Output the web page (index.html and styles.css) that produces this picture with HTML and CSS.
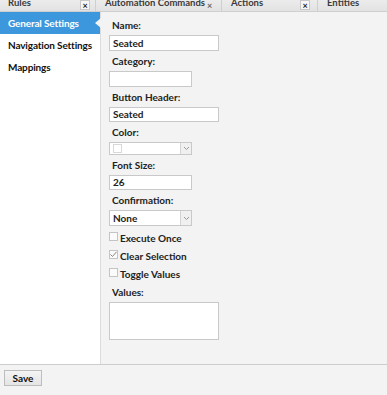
FILE: index.html
```html
<!DOCTYPE html>
<html lang="en">
<head>
  <meta charset="UTF-8">
  <title>Rule Editor</title>
  <link rel="stylesheet" href="styles.css">
</head>
<body>
  <div class="app">
    <div class="tabs">
      <div class="tab-row">
        <div class="tab tab-rules">Rules <span class="close boxed">×</span></div>
        <div class="tab tab-auto">Automation Commands <span class="close">×</span></div>
        <div class="tab tab-actions">Actions <span class="close boxed">×</span></div>
        <div class="tab tab-entities">Entities</div>
      </div>
    </div>

    <div class="main">
      <div class="sidebar">
        <div class="nav-item active">General Settings</div>
        <div class="nav-item">Navigation Settings</div>
        <div class="nav-item">Mappings</div>
      </div>

      <div class="content">
        <div class="field">
          <label>Name:</label>
          <div class="input wide">Seated</div>
        </div>
        <div class="field">
          <label>Category:</label>
          <div class="input narrow"></div>
        </div>
        <div class="field">
          <label>Button Header:</label>
          <div class="input wide slim">Seated</div>
        </div>
        <div class="field">
          <label>Color:</label>
          <div class="select narrow short">
            <span class="value"><span class="swatch"></span></span>
            <span class="arrow">
              <svg width="7" height="5" viewBox="0 0 7 5"><path d="M1 1 L3.5 3.5 L6 1" fill="none" stroke="#999" stroke-width="1"/></svg>
            </span>
          </div>
        </div>
        <div class="field">
          <label>Font Size:</label>
          <div class="input narrow slim">26</div>
        </div>
        <div class="field">
          <label>Confirmation:</label>
          <div class="select narrow">
            <span class="value">None</span>
            <span class="arrow">
              <svg width="7" height="5" viewBox="0 0 7 5"><path d="M1 1 L3.5 3.5 L6 1" fill="none" stroke="#999" stroke-width="1"/></svg>
            </span>
          </div>
        </div>

        <div class="check"><span class="box"></span>Execute Once</div>
        <div class="check"><span class="box checked">
          <svg width="7" height="7" viewBox="0 0 7 7"><path d="M0.5 3.5 L2.5 5.5 L6.5 0.8" fill="none" stroke="#888" stroke-width="1"/></svg>
        </span>Clear Selection</div>
        <div class="check"><span class="box"></span>Toggle Values</div>

        <div class="field values">
          <label>Values:</label>
          <div class="textarea"></div>
        </div>
      </div>
    </div>

    <div class="footer">
      <button class="btn">Save</button>
    </div>
  </div>
</body>
</html>
```

FILE: styles.css
```css
* {
  box-sizing: border-box;
}

body {
  margin: 0;
  font-family: Lato, 'Liberation Sans', sans-serif;
  font-weight: 700;
  font-size: 10px;
  color: #222;
  background: #f3f3f3;
}

.app {
  display: flex;
  flex-direction: column;
  height: 395px;
}

/* tab strip, scrolled so the top of the labels is cut off */
.tabs {
  height: 12px;
  overflow: hidden;
  background: linear-gradient(#ececec, #e2e2e2);
  border-bottom: 1px solid #cfcfcf;
}

.tab-row {
  display: flex;
  margin-top: -7px;
  height: 18px;
}

.tab {
  display: flex;
  align-items: center;
  height: 18px;
  padding-left: 9px;
  border-right: 1px solid #cfcfcf;
  font-size: 9.5px;
  white-space: nowrap;
  color: #3a3a3a;
}

.tab-rules { width: 96px; padding-left: 8px; }
.tab-auto { width: 126px; }
.tab-actions { width: 96px; }
.tab-entities { border-right: 0; }

.tab-rules .close { margin-left: auto; margin-right: 5px; }
.tab-auto .close { margin-left: auto; margin-right: 7px; }
.tab-actions .close { margin-left: auto; margin-right: 7px; }

.close {
  display: inline-flex;
  align-items: center;
  justify-content: center;
  width: 9px;
  height: 9px;
  margin-top: 6px;
  font-size: 9px;
  line-height: 1;
  color: #666;
}

.close.boxed {
  width: 10px;
  height: 10px;
  border: 1px solid #c8c8c8;
  background: #f6f6f6;
  color: #222;
}

.main {
  flex: 1;
  display: flex;
  min-height: 0;
}

.sidebar {
  width: 101px;
  background: #fff;
  border-right: 1px solid #dcdcdc;
}

.nav-item {
  position: relative;
  height: 22px;
  line-height: 22px;
  padding-left: 8px;
  font-size: 10px;
  letter-spacing: -0.15px;
  white-space: nowrap;
  color: #111;
}

.nav-item.active {
  background: #3c97dc;
  color: #fff;
}

.nav-item.active::after {
  content: '';
  position: absolute;
  right: -1px;
  top: 6px;
  border-top: 5px solid transparent;
  border-bottom: 5px solid transparent;
  border-right: 6px solid #f3f3f3;
}

.content {
  flex: 1;
  padding: 6px 0 0 8px;
  background: #f3f3f3;
}

.field label {
  display: block;
  height: 14px;
  line-height: 14px;
  padding-left: 3px;
  margin-bottom: 3px;
}

.field {
  margin-bottom: 3px;
}

.input,
.select,
.textarea {
  height: 16px;
  background: #fff;
  border: 1px solid #c9c9c9;
}

.input {
  line-height: 14px;
  padding-left: 3px;
}

.input.slim {
  height: 15px;
  line-height: 13px;
}

.wide { width: 110px; }
.narrow { width: 83px; }

.select {
  display: flex;
}

.select.short {
  height: 13px;
}

.select .value {
  flex: 1;
  display: flex;
  align-items: center;
  padding-left: 3px;
}

.select .arrow {
  display: flex;
  align-items: center;
  justify-content: center;
  width: 11px;
  background: #f0f0f0;
  border-left: 1px solid #d4d4d4;
}

.swatch {
  width: 9px;
  height: 9px;
  border: 1px solid #d8d8d8;
  background: #fff;
}

.check {
  display: flex;
  align-items: center;
  height: 18px;
}

.box {
  display: inline-flex;
  align-items: center;
  justify-content: center;
  width: 9px;
  height: 9px;
  margin-right: 2px;
  margin-top: -3px;
  border: 1px solid #c4c4c4;
  background: #fbfbfb;
}

.values {
  margin-top: 2px;
}

.textarea {
  width: 110px;
  height: 38px;
}

.footer {
  height: 31px;
  border-top: 1px solid #cdcdcd;
  background: #f3f3f3;
  padding: 5px 0 0 4px;
}

.btn {
  width: 38px;
  height: 16px;
  padding: 0;
  font-family: Lato, 'Liberation Sans', sans-serif;
  font-weight: 700;
  font-size: 10px;
  color: #111;
  background: linear-gradient(#f4f4f4, #e4e4e4);
  border: 1px solid #bdbdbd;
  border-radius: 0;
}
```
